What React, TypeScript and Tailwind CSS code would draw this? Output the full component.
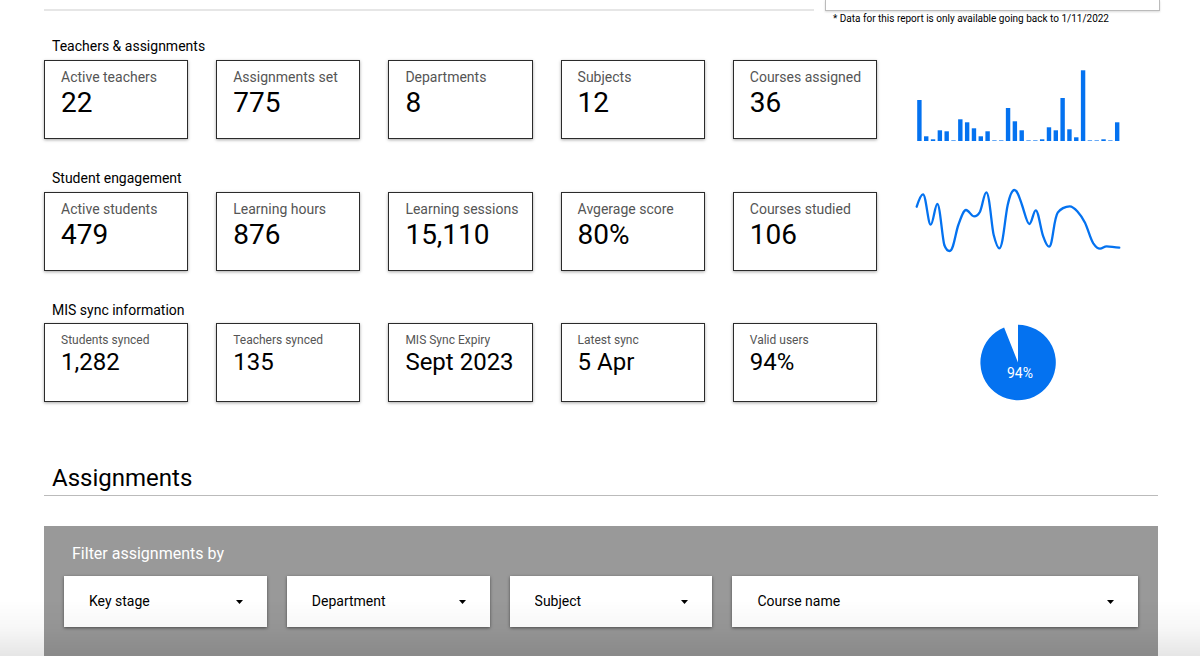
import type { ReactNode } from 'react';

type Stat = { label: string; value: string };

const teacherStats: Stat[] = [
  { label: 'Active teachers', value: '22' },
  { label: 'Assignments set', value: '775' },
  { label: 'Departments', value: '8' },
  { label: 'Subjects', value: '12' },
  { label: 'Courses assigned', value: '36' },
];

const studentStats: Stat[] = [
  { label: 'Active students', value: '479' },
  { label: 'Learning hours', value: '876' },
  { label: 'Learning sessions', value: '15,110' },
  { label: 'Avgerage score', value: '80%' },
  { label: 'Courses studied', value: '106' },
];

const syncStats: Stat[] = [
  { label: 'Students synced', value: '1,282' },
  { label: 'Teachers synced', value: '135' },
  { label: 'MIS Sync Expiry', value: 'Sept 2023' },
  { label: 'Latest sync', value: '5 Apr' },
  { label: 'Valid users', value: '94%' },
];

const bars = [
  41, 4.7, 1.7, 10.7, 9.7, 0.6, 21.7, 18.7, 12.7, 4.7, 9.7, 0.6, 0.6, 33, 19.7,
  10.7, 0.6, 0.6, 1.7, 13.7, 10.7, 43, 11.7, 3.7, 70.7, 0.6, 0.6, 1.7, 0.6, 18.7,
];

const filters = ['Key stage', 'Department', 'Subject', 'Course name'];

function StatCard({ stat, small }: { stat: Stat; small?: boolean }) {
  return (
    <div className="min-h-[79px] border border-[#2b2b2b] bg-white pl-4 pt-[6px] shadow-[0_1px_3px_rgba(0,0,0,0.35)] whitespace-nowrap">
      <p className={small ? 'text-[12px] leading-5 text-[#555]' : 'text-[14px] leading-5 text-[#555]'}>
        {stat.label}
      </p>
      <p className={small ? 'text-[24px] leading-6' : 'text-[28px] leading-8'}>{stat.value}</p>
    </div>
  );
}

function StatRow({ title, stats, small, chart }: { title: string; stats: Stat[]; small?: boolean; chart: ReactNode }) {
  return (
    <section>
      <h2 className="pl-2 text-[14px] leading-5">{title}</h2>
      <div className={small ? 'mt-[3px] flex' : 'mt-1 flex'}>
        <div className="grid flex-1 grid-cols-5 gap-7">
          {stats.map((s) => (
            <StatCard key={s.label} stat={s} small={small} />
          ))}
        </div>
        <div className="flex w-[281px] justify-center">{chart}</div>
      </div>
    </section>
  );
}

function BarChart() {
  return (
    <svg className="h-[79px] w-[207px] overflow-visible" viewBox="0 0 207 79" fill="#0472f0">
      {bars.map((h, i) => (
        <rect key={i} x={3.2 + i * 6.82} y={81 - h} width="4.4" height={h} />
      ))}
    </svg>
  );
}

function LineChart() {
  return (
    <svg className="h-[79px] w-[207px] overflow-visible" viewBox="0 0 207 79" fill="none">
      <path
        d="M2.7 14.7C4.5 9 7 2.3 9 2.3C12 2.3 14 32.7 16.7 32.7C19.2 32.7 21 12 23.3 12C26 12 28 44 30.3 53C31.8 57 34 59 35.7 59C39.5 59 41.5 41 44.3 33C46.8 26 49.5 18 52 18C55 18 57 24.3 60 24.3C62.5 24.3 64.5 22.5 66 19.7C68.5 14.5 70 0.3 72.3 0.3C75.5 0.3 77.5 34 79.7 43C81.5 50 83.5 56.3 85.3 56.3C89 56.3 91 25 93.7 13C95.5 5 97.8 -2 100.3 -2C103.5 -2 105.5 6 108 13C110.5 20 113 32 115.3 32C117.8 32 119.5 18.3 121.7 18.3C124.5 18.3 126.5 37 129.3 44.7C131 49.5 133.2 54.7 135 54.7C138.8 54.7 139.5 27 143.7 20.7C146 17 151.5 14.3 155.7 14.3C160 14.3 167 22.5 171 30.7C174 37 176.5 47 179.3 51.3C181.5 54.5 184 56.7 186 56.7C188.5 56.7 190 54.3 192.7 54.3C197 54.3 200 55.7 205.3 55.7"
        stroke="#0472f0"
        strokeWidth="2.3"
        strokeLinecap="round"
      />
    </svg>
  );
}

function PieChart() {
  return (
    <svg className="h-[79px] w-[207px] overflow-visible" viewBox="0 0 207 79">
      <path d="M104 39.5V1.8A37.7 37.7 0 1 1 90.1 4.5Z" fill="#0472f0" />
      <text x="106" y="55" textAnchor="middle" fontSize="14" fill="#fff">
        94%
      </text>
    </svg>
  );
}

function FilterSelect({ name }: { name: string }) {
  return (
    <div className="relative">
      <select
        aria-label={name}
        className="block h-[51px] w-full appearance-none bg-white pl-[25px] pr-10 text-[14px] text-black shadow-[0_1px_3px_rgba(0,0,0,0.5)]"
      >
        <option>{name}</option>
      </select>
      <svg className="pointer-events-none absolute right-6 top-6 h-1 w-[7px]" viewBox="0 0 7 4">
        <path d="M0 0H7L3.5 4Z" fill="#000" />
      </svg>
    </div>
  );
}

export default function App() {
  return (
    <div className="flex min-h-screen flex-col bg-white pl-[44px] pr-[42px] font-[Roboto,sans-serif] text-black">
      {/* Bottom of the report header */}
      <header className="-mr-0.5 flex gap-[11px]">
        <div className="h-[11px] flex-1 border-b-2 border-[#e6e6e6]" />
        <div className="w-[335px]">
          <div className="h-[11px] border border-t-0 border-[#bbb] shadow-[0_1px_2px_rgba(0,0,0,0.15)]" />
          <p className="pl-2 text-[10px] leading-4 whitespace-nowrap">
            * Data for this report is only available going back to 1/11/2022
          </p>
        </div>
      </header>

      <main className="flex flex-1 flex-col">
        <div className="mt-[9px] flex flex-col gap-[29px]">
          <StatRow title="Teachers & assignments" stats={teacherStats} chart={<BarChart />} />
          <StatRow title="Student engagement" stats={studentStats} chart={<LineChart />} />
          <StatRow title="MIS sync information" stats={syncStats} small chart={<PieChart />} />
        </div>

        <h1 className="mt-[60px] border-b border-[#bbb] pb-px pl-2 text-[24px] leading-8">Assignments</h1>

        {/* Filters */}
        <section className="mt-[30px] flex-1 bg-[#999] px-5 pb-7">
          <h2 className="pl-2 pt-4 text-[16px] leading-6 text-white">Filter assignments by</h2>
          <div className="mt-[10px] grid grid-cols-[1fr_1fr_1fr_2fr] gap-5">
            {filters.map((f) => (
              <FilterSelect key={f} name={f} />
            ))}
          </div>
        </section>
      </main>

      {/* Fade along the bottom of the window */}
      <div className="pointer-events-none fixed inset-x-0 bottom-0 h-14 bg-linear-to-b from-black/0 via-black/3 to-black/10" />
    </div>
  );
}
